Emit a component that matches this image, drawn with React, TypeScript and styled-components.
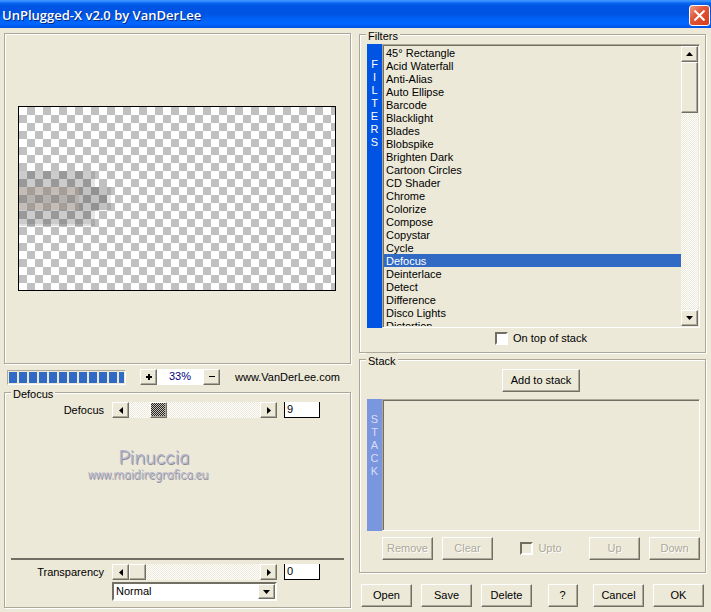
import React, { useState } from "react";
import styled, { createGlobalStyle, css } from "styled-components";

const face = "#ece9d8";
const shade = "#aca899";
const dark = "#716f64";
const accent = "#316ac5";

const Global = createGlobalStyle`
  * { box-sizing: border-box; }
  body { margin: 0; background: ${face}; }
  body, button, input, select {
    font-family: "Liberation Sans", Arial, sans-serif;
    font-size: 11px;
    line-height: 13px;
    color: #000;
  }
`;

const raised = css`
  border: 1px solid;
  border-color: #fff ${dark} ${dark} #fff;
  box-shadow: inset -1px -1px 0 ${shade};
`;

const sunken = css`
  border: 2px solid;
  border-color: ${dark} #fff #fff ${dark};
`;

const listEdge = css`
  border: 1px solid;
  border-color: ${shade} #fff #fff ${shade};
  box-shadow: inset 1px 1px 0 ${dark};
  padding: 1px;
`;

const etched = css`
  border: 1px solid ${shade};
  box-shadow: 1px 1px 0 #fff, inset 1px 1px 0 #fff;
`;

const dither = css`
  background: repeating-conic-gradient(#fff 0 25%, ${face} 0 50%) 0 0 / 2px 2px;
`;

const Window = styled.div`
  min-height: 100vh;
  display: flex;
  flex-direction: column;
  background: ${face};
`;

const TitleBar = styled.header`
  display: flex;
  align-items: center;
  justify-content: space-between;
  height: 28px;
  padding: 2px 1px 0 2px;
  background: linear-gradient(#3a93ff 0, #3a93ff 1px, #0a66f0 3px, #0054e3 6px, #0054e3 14px, #0063fb 20px, #0066ff 24px, #0050e0 28px);
`;

const Title = styled.h1`
  margin: 0;
  font: 600 13px/16px "Open Sans", sans-serif;
  color: #fff;
  text-shadow: 1px 1px 0 #0a2a80;
`;

const CloseButton = styled.button`
  display: grid;
  place-items: center;
  width: 21px;
  height: 21px;
  padding: 0;
  border: 1px solid #fff;
  border-radius: 3px;
  background: linear-gradient(135deg, #ee9a84, #e0573a 40%, #d63e18);
`;

const Columns = styled.main`
  flex: 1;
  display: grid;
  grid-template-columns: 1fr 1fr;
  gap: 8px;
  padding: 0 5px 4px 4px;
`;

const Column = styled.div`
  display: flex;
  flex-direction: column;
  min-width: 0;
`;

const Preview = styled.section`
  ${etched}
  flex: 1;
  display: grid;
  place-items: center;
  margin-top: 5px;
  padding-right: 1px;
`;

const Canvas = styled.svg`
  display: block;
  box-sizing: content-box;
  border: 1px solid #000;
`;

const Toolbar = styled.div`
  display: flex;
  align-items: center;
  height: 22px;
  padding: 4px 0 0 3px;
`;

const Progress = styled.div`
  width: 119px;
  height: 15px;
  margin-right: 14px;
  padding: 1px;
  border: 1px solid;
  border-color: ${shade} #fff #fff ${shade};
`;

const ProgressFill = styled.div`
  height: 100%;
  background: repeating-linear-gradient(90deg, ${accent} 0 8px, ${face} 8px 10px);
`;

const SmallButton = styled.button`
  ${raised}
  display: grid;
  place-items: center;
  flex: none;
  width: 17px;
  height: 16px;
  padding: 0;
  background: ${face};
`;

const Zoom = styled.output`
  width: 46px;
  height: 16px;
  background: #fff;
  color: #000080;
  line-height: 15px;
  text-align: center;
`;

const SiteLink = styled.a`
  margin-left: 15px;
  color: #000;
  text-decoration: none;
`;

const Group = styled.fieldset`
  ${etched}
  min-width: 0;
  margin: 0;
  padding: 0;
`;

const Legend = styled.legend`
  margin-left: 6px;
  padding: 4px 2px 0;
  line-height: 9px;
  background: ${face};
`;

const Settings = styled.div`
  display: flex;
  flex-direction: column;
  height: 208px;
  padding: 3px 6px 6px;
`;

const SettingRow = styled.div`
  display: grid;
  grid-template-columns: 94px 165px 36px;
  column-gap: 7px;
  align-items: center;
`;

const SettingLabel = styled.label`
  padding-right: 1px;
  text-align: right;
`;

const SliderBar = styled.div`
  ${dither}
  display: flex;
`;

const Range = styled.input<{ $active?: boolean }>`
  appearance: none;
  flex: 1;
  min-width: 0;
  height: 16px;
  margin: 0;
  background: transparent;
  &::-webkit-slider-thumb {
    appearance: none;
    ${raised}
    width: 17px;
    height: 16px;
    background: ${(p) =>
      p.$active ? "repeating-conic-gradient(#222 0 25%, #c8c5b8 0 50%) 0 0 / 2px 2px" : face};
  }
`;

const NumberBox = styled.input`
  width: 100%;
  height: 16px;
  padding: 0 2px 2px;
  border: 1px solid #000;
  border-top: 0;
  border-radius: 0;
  background: #fff;
`;

const Watermark = styled.div`
  flex: 1;
  width: 274px;
  padding-top: 30px;
  text-align: center;
  font-family: "Comic Sans MS", "Comic Neue", Lato, sans-serif;
  font-size: 12px;
  line-height: 14px;
  color: #b4b4cc;
  text-shadow: 1px 1px 0 #8c8c98;
`;

const WatermarkName = styled.div`
  padding-left: 12px;
  font-size: 20px;
  line-height: 20px;
`;

const WatermarkSite = styled.div`
  font-size: 13px;
`;

const Divider = styled.hr`
  width: 100%;
  height: 2px;
  margin: 0 0 4px;
  border: 0;
  background: ${dark};
`;

const BlendRow = styled.div`
  display: grid;
  grid-template-columns: 165px;
  padding: 2px 0 0 101px;
`;

const BlendBox = styled.div`
  ${sunken}
  display: flex;
  height: 19px;
  background: #fff;
`;

const BlendSelect = styled.select`
  appearance: none;
  flex: 1;
  padding: 0 0 0 2px;
  border: 0;
  background: #fff;
`;

const DropArrow = styled.span`
  ${raised}
  display: grid;
  place-items: center;
  width: 17px;
  background: ${face};
  pointer-events: none;
`;

const GroupBody = styled.div<{ $bottom: number }>`
  padding: 3px 5px ${(p) => p.$bottom}px 7px;
`;

const ListRow = styled.div<{ $height: number }>`
  display: flex;
  height: ${(p) => p.$height}px;
`;

const Strip = styled.div<{ $muted?: boolean }>`
  display: flex;
  flex-direction: column;
  align-items: center;
  width: 15px;
  padding-top: 14px;
  color: ${(p) => (p.$muted ? "#d6dff7" : "#fff")};
  background: ${(p) => (p.$muted ? "#7a96df" : "#0054e3")};
`;

const ListFrame = styled.div`
  ${listEdge}
  flex: 1;
  display: flex;
  min-width: 0;
`;

const List = styled.ul`
  flex: 1;
  margin: 0;
  padding: 0;
  overflow: hidden;
  list-style: none;
`;

const Item = styled.li<{ $selected: boolean }>`
  height: 13px;
  padding-left: 2px;
  line-height: 15px;
  color: ${(p) => (p.$selected ? "#fff" : "#000")};
  background: ${(p) => (p.$selected ? accent : "transparent")};
`;

const ScrollBar = styled.div`
  ${dither}
  display: flex;
  flex-direction: column;
  width: 17px;
`;

const ScrollThumb = styled.div`
  ${raised}
  height: 51px;
  margin-bottom: auto;
  background: ${face};
`;

const CheckLabel = styled.label<{ $disabled?: boolean }>`
  display: flex;
  align-items: center;
  gap: 5px;
  color: ${(p) => (p.$disabled ? shade : "#000")};
  text-shadow: ${(p) => (p.$disabled ? "1px 1px 0 #fff" : "none")};
`;

const CheckBox = styled.input`
  ${sunken}
  appearance: none;
  width: 13px;
  height: 13px;
  margin: 0;
  background: #fff;
  &:disabled { background: ${face}; }
  &:checked { background: ${dark}; }
`;

const CenterRow = styled.div<{ $top?: number; $bottom?: number }>`
  display: flex;
  justify-content: center;
  padding: ${(p) => p.$top ?? 0}px 0 ${(p) => p.$bottom ?? 0}px 15px;
`;

const Button = styled.button<{ $width?: number }>`
  ${raised}
  width: ${(p) => p.$width ?? 51}px;
  height: 23px;
  padding: 0;
  background: ${face};
  &:disabled {
    color: ${shade};
    text-shadow: 1px 1px 0 #fff;
  }
`;

const ButtonRow = styled.div`
  display: flex;
  align-items: center;
  justify-content: space-between;
`;

const ButtonCluster = styled.div`
  display: flex;
  gap: 9px;
`;

const StackActions = styled(ButtonRow)`
  padding: 6px 0 0 15px;
`;

const DialogActions = styled(ButtonRow)`
  margin-top: 11px;
  padding: 0 2px;
`;

const arrows = {
  up: "M0 4h7L3.500 0z",
  down: "M0 0h7L3.500 4z",
  left: "M4 0v7L0 3.500z",
  right: "M0 0v7L4 3.500z",
  plus: "M2 0h2v2h2v2H4v2H2V4H0V2h2z",
  minus: "M0 2h6v1H0z",
};

function Glyph({ kind }: { kind: keyof typeof arrows }) {
  const tall = kind === "left" || kind === "right";
  const sign = kind === "plus" || kind === "minus";
  const w = sign ? 6 : tall ? 4 : 7;
  const h = sign ? 6 : tall ? 7 : 4;
  return (
    <svg width={w} height={h} viewBox={`0 0 ${w} ${h}`} aria-hidden="true">
      <path d={arrows[kind]} shapeRendering={sign ? "crispEdges" : "auto"} />
    </svg>
  );
}

const filters = [
  "45° Rectangle", "Acid Waterfall", "Anti-Alias", "Auto Ellipse", "Barcode", "Blacklight",
  "Blades", "Blobspike", "Brighten Dark", "Cartoon Circles", "CD Shader", "Chrome", "Colorize",
  "Compose", "Copystar", "Cycle", "Defocus", "Deinterlace", "Detect", "Difference",
  "Disco Lights", "Distortion",
];

function Slider(props: {
  id: string;
  label: string;
  value: number;
  max: number;
  active?: boolean;
  onChange: (v: number) => void;
}) {
  const { id, label, value, max, active, onChange } = props;
  const set = (v: number) => onChange(Math.max(0, Math.min(max, v)));
  return (
    <SettingRow>
      <SettingLabel htmlFor={id}>{label}</SettingLabel>
      <SliderBar>
        <SmallButton aria-label={`Decrease ${label}`} onClick={() => set(value - 1)}>
          <Glyph kind="left" />
        </SmallButton>
        <Range
          type="range"
          aria-label={label}
          min={0}
          max={max}
          value={value}
          $active={active}
          onChange={(e) => set(Number(e.target.value))}
        />
        <SmallButton aria-label={`Increase ${label}`} onClick={() => set(value + 1)}>
          <Glyph kind="right" />
        </SmallButton>
      </SliderBar>
      <NumberBox id={id} value={value} onChange={(e) => set(Number(e.target.value) || 0)} />
    </SettingRow>
  );
}

function PreviewImage() {
  return (
    <Canvas width="316" height="183" viewBox="0 0 316 183" shapeRendering="crispEdges" role="img" aria-label="Preview">
      <defs>
        <pattern id="checker" width="16" height="16" patternUnits="userSpaceOnUse">
          <path d="M0 0h16v16H0z" fill="#fff" />
          <path d="M8 0h8v8H8zM0 8h8v8H0z" fill="#c0c0c0" />
        </pattern>
      </defs>
      <path d="M0 0h316v183H0z" fill="url(#checker)" />
      <path d="M0 64h72v16H0zM0 103h72v14H0z" fill="#000" opacity=".2" />
      <path d="M72 64h4v16h-4zM72 103h4v14h-4z" fill="#000" opacity=".1" />
      <path d="M0 117h76v2H0z" fill="#000" opacity=".12" />
      <path d="M60 80h28v23H60z" fill="#000" opacity=".24" />
      <path d="M88 80h4v23h-4z" fill="#000" opacity=".1" />
      <path d="M0 80h60v8H0zM0 96h60v7H0z" fill="#8a7c70" opacity=".5" />
      <path d="M0 88h60v8H0z" fill="#78706c" opacity=".54" />
    </Canvas>
  );
}

export default function App() {
  const [selected, setSelected] = useState("Defocus");
  const [defocus, setDefocus] = useState(9);
  const [transparency, setTransparency] = useState(0);
  const [zoom, setZoom] = useState(33);

  return (
    <Window>
      <Global />
      <TitleBar>
        <Title>UnPlugged-X v2.0 by VanDerLee</Title>
        <CloseButton aria-label="Close">
          <svg width="11" height="11" viewBox="0 0 11 11" stroke="#fff" strokeWidth="2" aria-hidden="true">
            <path d="M0.500 0.500l10 10M10.500 0.500l-10 10" />
          </svg>
        </CloseButton>
      </TitleBar>
      <Columns>
        <Column>
          <Preview>
            <PreviewImage />
          </Preview>
          <Toolbar>
            <Progress role="progressbar" aria-label="Rendering" aria-valuenow={100}>
              <ProgressFill />
            </Progress>
            <SmallButton aria-label="Zoom in" onClick={() => setZoom(zoom + 1)}>
              <Glyph kind="plus" />
            </SmallButton>
            <Zoom>{zoom}%</Zoom>
            <SmallButton aria-label="Zoom out" onClick={() => setZoom(zoom - 1)}>
              <Glyph kind="minus" />
            </SmallButton>
            <SiteLink href="#">www.VanDerLee.com</SiteLink>
          </Toolbar>
          <Group>
            <Legend>{selected}</Legend>
            <Settings>
              <Slider id="defocus" label="Defocus" value={defocus} max={50} active onChange={setDefocus} />
              <Watermark>
                <WatermarkName>Pinuccia</WatermarkName>
                <WatermarkSite>www.maidiregrafica.eu</WatermarkSite>
              </Watermark>
              <Divider />
              <Slider id="transparency" label="Transparency" value={transparency} max={255} onChange={setTransparency} />
              <BlendRow>
                <BlendBox>
                  <BlendSelect aria-label="Blend mode">
                    <option>Normal</option>
                  </BlendSelect>
                  <DropArrow>
                    <Glyph kind="down" />
                  </DropArrow>
                </BlendBox>
              </BlendRow>
            </Settings>
          </Group>
        </Column>
        <Column>
          <Group>
            <Legend>Filters</Legend>
            <GroupBody $bottom={7}>
              <ListRow $height={284}>
                <Strip>
                  {[..."FILTERS"].map((c, i) => <span key={i}>{c}</span>)}
                </Strip>
                <ListFrame>
                  <List role="listbox" aria-label="Filters">
                    {filters.map((name) => (
                      <Item
                        key={name}
                        role="option"
                        aria-selected={name === selected}
                        $selected={name === selected}
                        onClick={() => setSelected(name)}
                      >
                        {name}
                      </Item>
                    ))}
                  </List>
                  <ScrollBar>
                    <SmallButton aria-label="Scroll up"><Glyph kind="up" /></SmallButton>
                    <ScrollThumb />
                    <SmallButton aria-label="Scroll down"><Glyph kind="down" /></SmallButton>
                  </ScrollBar>
                </ListFrame>
              </ListRow>
              <CenterRow $top={4}>
                <CheckLabel>
                  <CheckBox type="checkbox" />
                  On top of stack
                </CheckLabel>
              </CenterRow>
            </GroupBody>
          </Group>
          <Group>
            <Legend>Stack</Legend>
            <GroupBody $bottom={12}>
              <CenterRow $bottom={7}>
                <Button $width={78}>Add to stack</Button>
              </CenterRow>
              <ListRow $height={132}>
                <Strip $muted>
                  {[..."STACK"].map((c, i) => <span key={i}>{c}</span>)}
                </Strip>
                <ListFrame />
              </ListRow>
              <StackActions>
                <ButtonCluster>
                  <Button disabled>Remove</Button>
                  <Button disabled>Clear</Button>
                </ButtonCluster>
                <CheckLabel $disabled>
                  <CheckBox type="checkbox" disabled />
                  Upto
                </CheckLabel>
                <ButtonCluster>
                  <Button disabled>Up</Button>
                  <Button disabled>Down</Button>
                </ButtonCluster>
              </StackActions>
            </GroupBody>
          </Group>
          <DialogActions>
            <ButtonCluster>
              <Button>Open</Button>
              <Button>Save</Button>
              <Button>Delete</Button>
            </ButtonCluster>
            <Button $width={30}>?</Button>
            <ButtonCluster>
              <Button>Cancel</Button>
              <Button>OK</Button>
            </ButtonCluster>
          </DialogActions>
        </Column>
      </Columns>
    </Window>
  );
}
